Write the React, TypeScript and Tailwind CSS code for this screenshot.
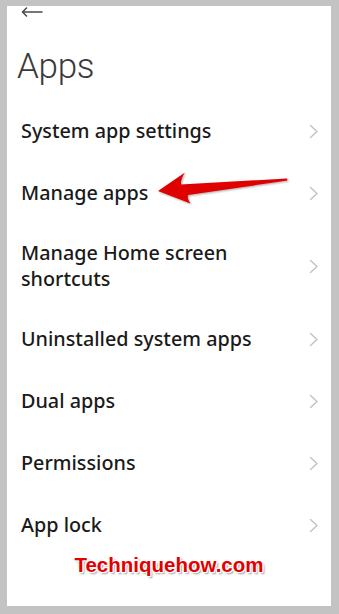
import React from "react";

const Chevron = () => (
  <svg width="10" height="15" viewBox="0 0 10 15" className="shrink-0">
    <path d="M1.5 1.5 L8 7.5 L1.5 13.5" fill="none" stroke="#c2c2c2" strokeWidth="1.4" strokeLinecap="round" strokeLinejoin="round" />
  </svg>
);

const rows: { label: string[]; tall?: boolean }[] = [
  { label: ["System app settings"] },
  { label: ["Manage apps"] },
  { label: ["Manage Home screen", "shortcuts"], tall: true },
  { label: ["Uninstalled system apps"] },
  { label: ["Dual apps"] },
  { label: ["Permissions"] },
  { label: ["App lock"] },
];

export default function App() {
  return (
    <div className="w-[339px] h-[614px] bg-[#c3c3c3] pl-[7px] pr-[8px] pt-[6px] pb-[8px]">
      <div
        className="relative w-full h-full bg-white flex flex-col overflow-hidden"
        style={{ fontFamily: "Roboto, 'Noto Sans', sans-serif" }}
      >
        <div className="pl-[14px] pt-[1px] h-[11px]">
          <svg width="22" height="10" viewBox="0 0 22 10">
            <path d="M21 5 H1.5 M5.5 1 L1.5 5 L5.5 9" fill="none" stroke="#4a4a4a" strokeWidth="1.6" strokeLinecap="round" strokeLinejoin="round" />
          </svg>
        </div>
        <div className="mt-[28px] pl-[10px] text-[35px] leading-[44px] font-light text-[#3a3a3a] tracking-[-0.3px]">
          Apps
        </div>
        <div className="mt-[11px] flex flex-col">
          {rows.map((r, i) => (
            <div
              key={i}
              className={`flex items-center justify-between pl-[14px] pr-[12px] ${r.tall ? "h-[84px]" : "h-[62px]"}`}
            >
              <div
                className="text-[19.8px] leading-[26px] text-[#1a1a1a] font-medium"
                style={{ fontFamily: "'Noto Sans', Roboto, sans-serif" }}
              >
                {r.label.map((l, j) => (
                  <div key={j}>{l}</div>
                ))}
              </div>
              <Chevron />
            </div>
          ))}
        </div>
        <div
          className="text-center text-[20.5px] leading-[18px] font-bold text-[#e30000]"
          style={{
            fontFamily: "'Liberation Sans', Arial, sans-serif",
            textShadow:
              "1px 0 0 #fff, -1px 0 0 #fff, 0 1px 0 #fff, 0 -1px 0 #fff, 1px 1px 0 #fff, -1px -1px 0 #fff, 1px -1px 0 #fff, -1px 1px 0 #fff, 2px 2px 2px #9a9a9a",
          }}
        >
          Techniquehow.com
        </div>
        <svg
          className="absolute left-0 top-0"
          width="324"
          height="600"
          viewBox="7 6 324 600"
          style={{ filter: "drop-shadow(1px 1px 1px rgba(0,0,0,0.35))" }}
        >
          <path
            d="M158 191 L185 172.5 Q180.5 179 181 184.5 L287 178.5 L287.5 180.5 L188 195 Q187 199.5 190.5 203.5 Z"
            fill="#e00000"
          />
        </svg>
      </div>
    </div>
  );
}
